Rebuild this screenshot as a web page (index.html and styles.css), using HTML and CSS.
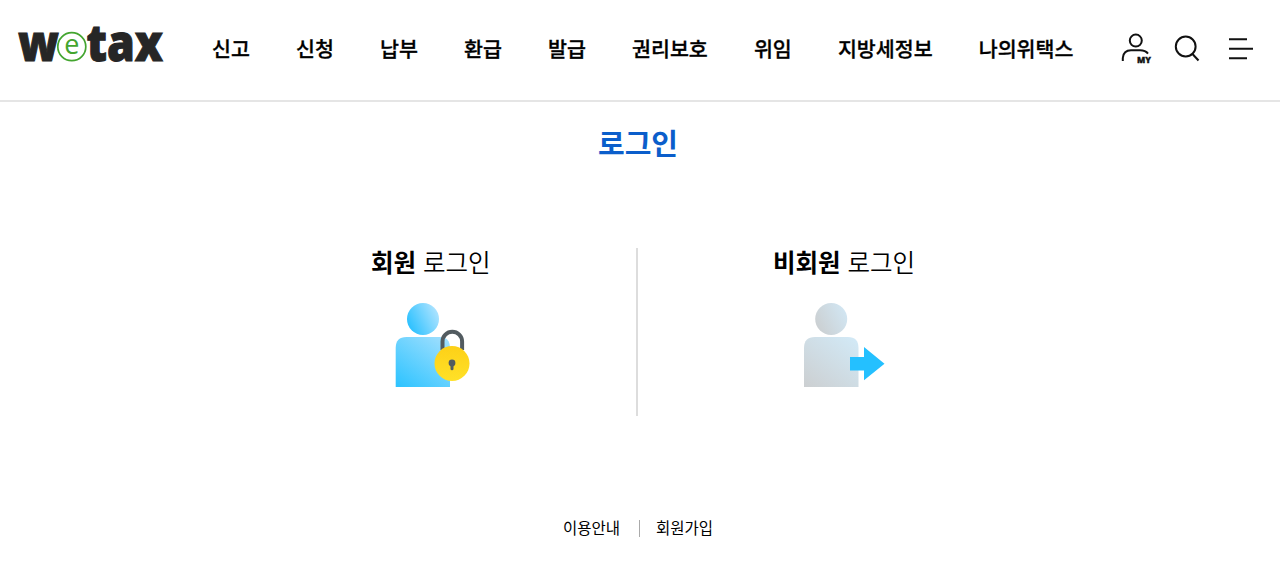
FILE: index.html
```html
<!DOCTYPE html>
<html lang="ko">
<head>
  <meta charset="UTF-8">
  <meta name="viewport" content="width=device-width, initial-scale=1.0">
  <title>로그인</title>
  <link rel="stylesheet" href="styles.css">
</head>
<body>

  <!-- Header -->
  <header class="header">
    <a href="#" class="logo">
      <svg width="170" height="90" viewBox="0 -22 170 90">
        <text class="logo-text" x="1" y="38.500" textLength="41" lengthAdjust="spacingAndGlyphs">w</text>
        <text class="logo-text" x="69.500" y="38.500" textLength="76.500" lengthAdjust="spacingAndGlyphs">tax</text>
        <circle cx="54.800" cy="24.700" r="14" fill="#fff" stroke="#43a52f" stroke-width="1.700"/>
        <text class="logo-e" x="54.800" y="31.800" text-anchor="middle">e</text>
      </svg>
    </a>

    <nav class="menu">
      <a href="#">신고</a>
      <a href="#">신청</a>
      <a href="#">납부</a>
      <a href="#">환급</a>
      <a href="#">발급</a>
      <a href="#">권리보호</a>
      <a href="#">위임</a>
      <a href="#">지방세정보</a>
      <a href="#">나의위택스</a>
    </nav>

    <div class="tools">
      <a href="#">
        <svg width="32" height="34" viewBox="0 0 32 34" fill="none" stroke="#111" stroke-width="2">
          <circle cx="15.800" cy="8.600" r="6"/>
          <path d="M2.800 29V26Q3.500 18.300 11 18.300H20Q25.500 18.300 28 21.600"/>
          <text class="my-text" x="17" y="31.300" textLength="14" lengthAdjust="spacingAndGlyphs">MY</text>
        </svg>
      </a>
      <a href="#">
        <svg width="26" height="34" viewBox="0 0 26 34" fill="none" stroke="#111" stroke-width="2">
          <circle cx="11.700" cy="14.500" r="9.900"/>
          <path d="M18.500 22L24.500 28.500"/>
        </svg>
      </a>
      <a href="#">
        <svg width="26" height="34" viewBox="0 0 26 34" stroke="#111" stroke-width="2">
          <path d="M1 7.200H19M1 16.700H25M1 26.200H19"/>
        </svg>
      </a>
    </div>
  </header>

  <!-- Login -->
  <main class="login">
    <h1>로그인</h1>

    <div class="login-types">
      <a href="#" class="login-type member">
        <h2>회원 <span>로그인</span></h2>
        <svg width="76" height="86" viewBox="0 0 76 86">
          <defs>
            <linearGradient id="headBlue" x1="0" y1="0.700" x2="1" y2="0.200">
              <stop offset="0" stop-color="#28c0ff"/>
              <stop offset="1" stop-color="#b5e5ff"/>
            </linearGradient>
            <linearGradient id="bodyBlue" x1="0.100" y1="1" x2="0.900" y2="0">
              <stop offset="0" stop-color="#30c4ff"/>
              <stop offset="1" stop-color="#a0dffe"/>
            </linearGradient>
            <linearGradient id="lockYellow" x1="0" y1="0" x2="0" y2="1">
              <stop offset="0" stop-color="#fdd017"/>
              <stop offset="1" stop-color="#ffe128"/>
            </linearGradient>
          </defs>
          <circle cx="28" cy="17" r="16" fill="url(#headBlue)"/>
          <path d="M0.700 85V46Q0.700 35 11.500 35H44.500Q55 35 55 46V85Z" fill="url(#bodyBlue)"/>
          <path d="M47.500 48V39.500A9.800 9.800 0 0 1 67.100 39.500V48" fill="none" stroke="#525b60" stroke-width="4"/>
          <circle cx="57" cy="61.500" r="17.500" fill="url(#lockYellow)"/>
          <circle cx="57" cy="61" r="3.400" fill="#525b60"/>
          <path d="M57 62V66.700" stroke="#525b60" stroke-width="3" stroke-linecap="round"/>
        </svg>
      </a>

      <a href="#" class="login-type guest">
        <h2>비회원 <span>로그인</span></h2>
        <svg width="84" height="86" viewBox="0 0 84 86">
          <defs>
            <linearGradient id="headGray" x1="0" y1="0.700" x2="1" y2="0.200">
              <stop offset="0" stop-color="#cbcfd1"/>
              <stop offset="1" stop-color="#d2e7f4"/>
            </linearGradient>
            <linearGradient id="bodyGray" x1="0" y1="1" x2="0.900" y2="0">
              <stop offset="0" stop-color="#cccfd1"/>
              <stop offset="1" stop-color="#d2e9f6"/>
            </linearGradient>
          </defs>
          <circle cx="28.200" cy="17" r="16" fill="url(#headGray)"/>
          <path d="M1 85V46Q1 35 12 35H45Q55.500 35 55.500 46V85Z" fill="url(#bodyGray)"/>
          <path d="M47 55H61V45L81.500 61.700L61 78.200V68.500H47Z" fill="#24c0ff"/>
        </svg>
      </a>
    </div>

    <div class="links">
      <a href="#">이용안내</a>
      <span class="bar"></span>
      <a href="#">회원가입</a>
    </div>
  </main>

</body>
</html>
```

FILE: styles.css
```css
* {
  box-sizing: border-box;
}

body {
  margin: 0;
  background-color: #fff;
  color: #000;
  font-family: "Noto Sans CJK KR", sans-serif;
}

a {
  color: inherit;
  text-decoration: none;
}

svg {
  display: block;
}

.header {
  display: flex;
  align-items: flex-start;
  height: 102px;
  padding-left: 17px;
  border-bottom: 2px solid #e5e5e5;
}

.logo {
  width: 195px;
}

.logo-text {
  font-family: "Open Sans", "Noto Sans", sans-serif;
  font-size: 51px;
  font-weight: 800;
  fill: #262626;
  stroke: #262626;
  stroke-width: 1px;
}

.logo-e {
  font-family: "Open Sans", "Noto Sans", sans-serif;
  font-size: 27px;
  fill: #43a52f;
}

.menu {
  display: flex;
  gap: 46.1px;
  padding-top: 33px;
  font-size: 20.6px;
  font-weight: 500;
  line-height: 30px;
  white-space: nowrap;
  -webkit-text-stroke: 0.3px #000;
}

.tools {
  display: flex;
  padding-top: 32px;
  margin-left: 46.7px;
  gap: 22px;
}

.tools a:last-child {
  margin-left: 6px;
}

.my-text {
  font-family: "Open Sans", sans-serif;
  font-size: 9.5px;
  font-weight: 800;
  fill: #111;
  stroke: #111;
  stroke-width: 0.4px;
}

.login h1 {
  margin: 0;
  padding-top: 18px;
  padding-right: 4px;
  font-size: 29px;
  font-weight: 700;
  line-height: 44px;
  text-align: center;
  color: #0b5ecb;
}

.login-types {
  display: flex;
  height: 168px;
  margin-top: 84px;
}

.login-type.member {
  width: 638px;
  padding-left: 371px;
  border-right: 2px solid #ddd;
}

.login-type.guest {
  padding-left: 135px;
}

.login-type h2 {
  margin: -1px 0 25px;
  font-size: 24.5px;
  font-weight: 700;
  line-height: 30px;
  white-space: nowrap;
}

.login-type h2 span {
  font-weight: 350;
}

.member svg {
  margin-left: 23.5px;
}

.guest svg {
  margin-left: 30px;
}

.links {
  display: flex;
  align-items: center;
  margin-top: 99px;
  padding-left: 563px;
  font-size: 15.5px;
  line-height: 24px;
}

.links .bar {
  width: 1px;
  height: 17px;
  margin: 2px 16px 0 19px;
  background-color: #aaa;
}
```
